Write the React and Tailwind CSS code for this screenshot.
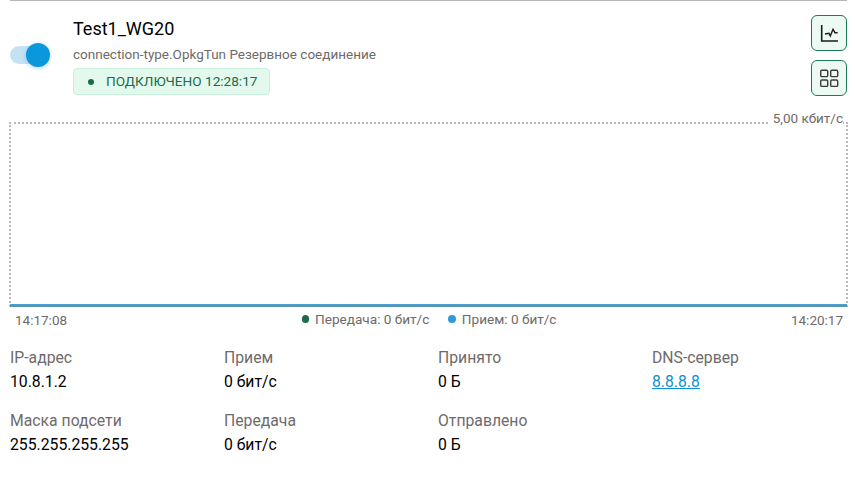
import React from 'react';

const stats = [
  [
    { label: 'IP-адрес', value: '10.8.1.2' },
    { label: 'Маска подсети', value: '255.255.255.255' },
  ],
  [
    { label: 'Прием', value: '0 бит/с' },
    { label: 'Передача', value: '0 бит/с' },
  ],
  [
    { label: 'Принято', value: '0 Б' },
    { label: 'Отправлено', value: '0 Б' },
  ],
  [{ label: 'DNS-сервер', value: '8.8.8.8', link: true }],
];

const ChartIcon = () => (
  <svg width="20" height="20" viewBox="0 0 20 20" fill="none" stroke="#1c1c1c" strokeWidth="1.6">
    <path d="M2.7 2v16H19" />
    <path d="M6 11l4-.7 1.3 2.7 2.7-6.7 2 3.4h2.6" strokeWidth="1.4" />
  </svg>
);

const GridIcon = () => (
  <svg width="20" height="20" viewBox="0 0 20 20" fill="none" stroke="#3a3a3a" strokeWidth="1.4">
    <rect x="1.7" y="2.2" width="7" height="6.4" rx="1.2" />
    <rect x="11.7" y="2.2" width="7" height="6.4" rx="1.2" />
    <rect x="1.7" y="12" width="7" height="6.4" rx="1.2" />
    <rect x="11.7" y="12" width="7" height="6.4" rx="1.2" />
  </svg>
);

const IconButton = ({ children }) => (
  <button className="w-[36px] h-[36px] flex items-center justify-center rounded-[6px] border border-[#1c7a57] bg-[#ecfaf3]">
    {children}
  </button>
);

export default function App() {
  return (
    <div className="w-[855px] h-[487px] bg-white overflow-hidden pl-[10px] pr-[8px] font-['Roboto',sans-serif]">
      <div className="h-[1px] bg-[#bbb6b6]" />

      <div className="flex items-start h-[121px]">
        <div className="w-[63px] pt-[45px] shrink-0">
          <div className="relative w-[36px] h-[18px] rounded-full bg-[#c5e2f5]">
            <span className="absolute left-[16px] top-[-3px] w-[24px] h-[24px] rounded-full bg-[#0b97dc] shadow-[0_1px_4px_rgba(11,151,220,0.35)]" />
          </div>
        </div>
        <div className="flex-1 pt-[17px]">
          <div className="text-[18px] leading-[22px] text-black">Test1_WG20</div>
          <div className="mt-[6px] text-[13.5px] leading-[17px] text-[#6f6a6a]">connection-type.OpkgTun Резервное соединение</div>
          <div className="mt-[5px] inline-flex items-center h-[27px] pl-[14px] pr-[12px] gap-[12px] rounded-[4px] border border-[#c6f0da] bg-[#e4f9ee] text-[13.6px] text-[#1a6b4c]">
            <span className="w-[6px] h-[6px] rounded-full bg-[#1a6b4c]" />
            ПОДКЛЮЧЕНО 12:28:17
          </div>
        </div>
        <div className="flex flex-col gap-[9px] pt-[14px]">
          <IconButton><ChartIcon /></IconButton>
          <IconButton><GridIcon /></IconButton>
        </div>
      </div>

      <div className="relative ml-[-1px] h-[185px] w-[839px] border-[2px] border-b-0 border-dotted border-[#b8b8b8]">
        <span className="absolute right-[3px] top-[-14px] bg-white pl-[4px] text-[13.5px] leading-[17px] text-[#6f6a6a]">5,00 кбит/с</span>
        <div className="absolute left-[-1px] right-[-1px] bottom-0 h-[3px] flex flex-col">
          <div className="h-[1px] bg-[#4aa0d0]" />
          <div className="h-[2px] bg-[#5f93a6]" />
        </div>
      </div>

      <div className="flex items-center justify-between w-[835px] h-[26px] pl-[5px] pr-[2px] text-[13.5px] text-[#6f6a6a]">
        <span>14:17:08</span>
        <div className="flex items-center gap-[19px] pb-[2px] text-[13.6px]">
          <span className="flex items-center gap-[6px]">
            <i className="w-[7.5px] h-[7.5px] rounded-full bg-[#1a6b4c]" />
            Передача: 0 бит/с
          </span>
          <span className="flex items-center gap-[6px]">
            <i className="w-[7.5px] h-[7.5px] rounded-full bg-[#2e9bd8]" />
            Прием: 0 бит/с
          </span>
        </div>
        <span>14:20:17</span>
      </div>

      <div className="grid grid-cols-[214px_214px_214px_1fr] pt-[13px]">
        {stats.map((col, i) => (
          <div key={i} className="flex flex-col gap-[16px]">
            {col.map((s) => (
              <div key={s.label}>
                <div className="text-[15.75px] leading-[24px] text-[#6f6a6a]">{s.label}</div>
                {s.link ? (
                  <a href="#" className="block text-[15.75px] leading-[23px] text-[#0b8fd6] underline">{s.value}</a>
                ) : (
                  <div className="text-[15.75px] leading-[23px] text-black">{s.value}</div>
                )}
              </div>
            ))}
          </div>
        ))}
      </div>
    </div>
  );
}
